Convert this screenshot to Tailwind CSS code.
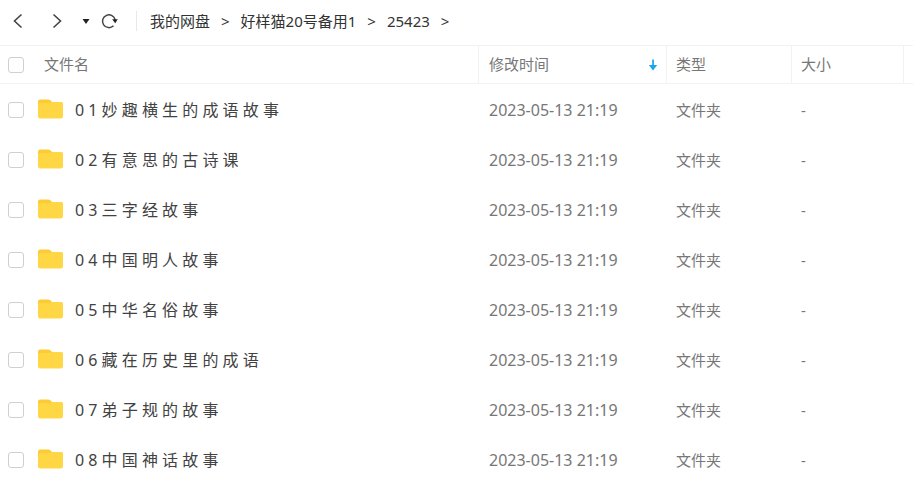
<!DOCTYPE html>
<html lang="zh-CN">
<head>
  <meta charset="UTF-8" />
  <meta name="viewport" content="width=device-width, initial-scale=1.0" />
  <title>我的网盘</title>
  <script src="https://cdn.jsdelivr.net/npm/@tailwindcss/browser@4"></script>
</head>
<body class="bg-white font-['Noto_Sans','Noto_Sans_CJK_SC',sans-serif] text-[15px]">
  <!-- 文件夹图标 -->
  <svg class="hidden">
    <symbol id="folder" viewBox="0 0 25 20">
      <path d="M0 2.800A2.300 2.300 0 0 1 2.300.5h7.900c.7 0 1.200.2 1.700.6l2.300 1.900h8.500A2.300 2.300 0 0 1 25 5.300V12H0z" fill="#fccb35" />
      <path d="M0 6.300A2.300 2.300 0 0 1 2.300 4h9.200c.6 0 1-.1 1.500-.4l.6-.3c.4-.2.8-.3 1.200-.3h7.900A2.300 2.300 0 0 1 25 5.300v11.900a2.300 2.300 0 0 1-2.300 2.300H2.300A2.300 2.300 0 0 1 0 17.200z" fill="#ffd745" />
    </symbol>
  </svg>

  <!-- 工具栏 -->
  <header class="flex h-[46px] items-center border-b border-[#f2f2f2] pb-[3px] pl-3 text-[#333]">
    <button type="button" aria-label="后退" class="flex h-6 w-3 items-center justify-center">
      <svg width="12" height="16" viewBox="0 0 12 16" fill="none" stroke="#444" stroke-width="1.6"><path d="M9.500 1.500 2.500 8l7 6.500" /></svg>
    </button>
    <button type="button" aria-label="前进" class="ml-7 flex h-6 w-3 items-center justify-center">
      <svg width="12" height="16" viewBox="0 0 12 16" fill="none" stroke="#444" stroke-width="1.6"><path d="M1.500 1.500 8.500 8l-7 6.500" /></svg>
    </button>
    <button type="button" aria-label="历史记录" class="ml-4 flex h-6 w-3 items-center justify-center">
      <svg width="8" height="5" viewBox="0 0 8 5" fill="#222"><path d="M.5 0h7L4 5z" /></svg>
    </button>
    <button type="button" aria-label="刷新" class="ml-2 flex h-6 w-5 items-center justify-center">
      <svg width="18" height="16" viewBox="0 0 18 16" fill="none">
        <path d="M12.500 12.700A6.400 6.400 0 1 1 14.200 7" stroke="#444" stroke-width="1.500" />
        <path d="M11.200 6.300h5.600l-2.600 3.900z" fill="#222" />
      </svg>
    </button>
    <nav aria-label="路径" class="ml-4 flex h-5 items-center gap-[11px] border-l border-[#e8e8e8] pl-[13px] whitespace-nowrap">
      <a href="#">我的网盘</a>
      <span>&gt;</span>
      <a href="#">好样猫20号备用1</a>
      <span>&gt;</span>
      <a href="#">25423</a>
      <span>&gt;</span>
    </nav>
  </header>

  <!-- 文件列表 -->
  <table class="w-full table-fixed border-separate border-spacing-0 text-left text-[#777]">
    <colgroup>
      <col class="w-[38px]" />
      <col />
      <col class="w-[188px]" />
      <col class="w-[125px]" />
      <col class="w-[112px]" />
      <col class="w-[10px]" />
    </colgroup>
    <thead>
      <tr class="h-[38px] *:border-b *:border-[#f2f2f2] *:p-0 *:font-normal">
        <th><input type="checkbox" aria-label="全选" class="ml-2 block size-4 appearance-none rounded-[3px] border border-[#d0d0d0] bg-white" /></th>
        <th><span class="pl-[6px]">文件名</span></th>
        <th class="border-l">
          <button type="button" class="flex w-full items-center justify-between pr-2 pl-[10px]">
            修改时间
            <svg width="10" height="12" viewBox="0 0 10 12" fill="#1aa5ee"><path d="M4.200.5h1.700v5.600h3.300L5 11.500.8 6.100h3.400z" /></svg>
          </button>
        </th>
        <th class="border-l"><span class="pl-[9px]">类型</span></th>
        <th class="border-l"><span class="pl-[9px]">大小</span></th>
        <th class="border-l"></th>
      </tr>
    </thead>
    <tbody id="fileList" class="before:block before:h-px"></tbody>
  </table>

  <script>
    const files = [
      '0 1 妙 趣 横 生 的 成 语 故 事',
      '0 2 有 意 思 的 古 诗 课',
      '0 3 三 字 经 故 事',
      '0 4 中 国 明 人 故 事',
      '0 5 中 华 名 俗 故 事',
      '0 6 藏 在 历 史 里 的 成 语',
      '0 7 弟 子 规 的 故 事',
      '0 8 中 国 神 话 故 事',
    ];

    document.getElementById('fileList').innerHTML = files.map((name, i) => `
      <tr class="h-[50px] *:p-0">
        <td><input type="checkbox" id="file${i}" class="ml-2 block size-4 appearance-none rounded-[3px] border border-[#d0d0d0] bg-white" /></td>
        <td>
          <label for="file${i}" class="flex items-center gap-3 text-base whitespace-nowrap text-[#424242]">
            <svg class="mb-[3px] h-5 w-[25px] shrink-0"><use href="#folder" /></svg>
            ${name}
          </label>
        </td>
        <td class="pl-[11px]! text-base">2023-05-13 21:19</td>
        <td class="pl-[10px]!">文件夹</td>
        <td class="pl-[10px]!">-</td>
        <td></td>
      </tr>
    `).join('');
  </script>
</body>
</html>
